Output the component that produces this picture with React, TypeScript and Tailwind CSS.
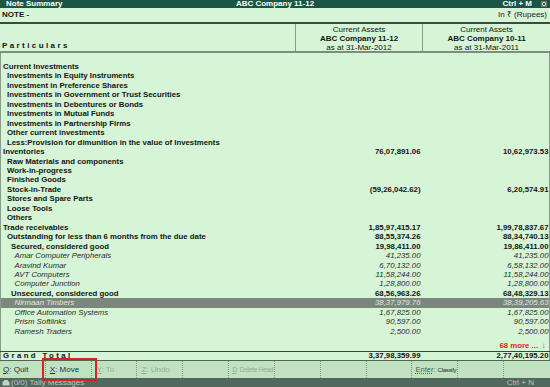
import React from 'react';

type Row = { t: string; l: number; k: 'b' | 'i' | 'h'; a?: string; b?: string };

const R: Row[] = [
  { t: 'Current Investments', l: 0, k: 'b' },
  { t: 'Investments in Equity Instruments', l: 1, k: 'b' },
  { t: 'Investment in Preference Shares', l: 1, k: 'b' },
  { t: 'Investments in Government or Trust Securities', l: 1, k: 'b' },
  { t: 'Investments in Debentures or Bonds', l: 1, k: 'b' },
  { t: 'Investments in Mutual Funds', l: 1, k: 'b' },
  { t: 'Investments in Partnership Firms', l: 1, k: 'b' },
  { t: 'Other current investments', l: 1, k: 'b' },
  { t: 'Less:Provision for dimunition in the value of Investments', l: 1, k: 'b' },
  { t: 'Inventories', l: 0, k: 'b', a: '76,07,891.06', b: '10,62,973.53' },
  { t: 'Raw Materials and components', l: 1, k: 'b' },
  { t: 'Work-in-progress', l: 1, k: 'b' },
  { t: 'Finished Goods', l: 1, k: 'b' },
  { t: 'Stock-in-Trade', l: 1, k: 'b', a: '(59,26,042.62)', b: '6,20,574.91' },
  { t: 'Stores and Spare Parts', l: 1, k: 'b' },
  { t: 'Loose Tools', l: 1, k: 'b' },
  { t: 'Others', l: 1, k: 'b' },
  { t: 'Trade receivables', l: 0, k: 'b', a: '1,85,97,415.17', b: '1,99,78,837.67' },
  { t: 'Outstanding for less than 6 months from the due date', l: 1, k: 'b', a: '88,55,374.26', b: '88,34,740.13' },
  { t: 'Secured, considered good', l: 2, k: 'b', a: '19,98,411.00', b: '19,86,411.00' },
  { t: 'Amar Computer Peripherals', l: 3, k: 'i', a: '41,235.00', b: '41,235.00' },
  { t: 'Aravind Kumar', l: 3, k: 'i', a: '6,70,132.00', b: '6,58,132.00' },
  { t: 'AVT Computers', l: 3, k: 'i', a: '11,58,244.00', b: '11,58,244.00' },
  { t: 'Computer Junction', l: 3, k: 'i', a: '1,28,800.00', b: '1,28,800.00' },
  { t: 'Unsecured, considered good', l: 2, k: 'b', a: '68,56,963.26', b: '68,48,329.13' },
  { t: 'Nirmaan Timbers', l: 3, k: 'h', a: '38,37,979.76', b: '38,39,205.63' },
  { t: 'Office Automation Systems', l: 3, k: 'i', a: '1,67,825.00', b: '1,67,825.00' },
  { t: 'Prism Softlinks', l: 3, k: 'i', a: '90,597.00', b: '90,597.00' },
  { t: 'Ramesh Traders', l: 3, k: 'i', a: '2,500.00', b: '2,500.00' },
];

const indent = ['pl-[2px]', 'pl-[6px]', 'pl-[10px]', 'pl-[13.5px]'];

function BodyRow({ r }: { r: Row }) {
  const cls =
    r.k === 'h'
      ? 'bg-[#7b867c] text-[#e2e8e2] italic'
      : r.k === 'i'
      ? 'italic text-[#2a2a2a]'
      : 'font-bold text-[#141414]';
  return (
    <div className={`grid grid-cols-[294px_127px_1fr] h-[9.46px] leading-[9.46px] ${cls}`}>
      <div className={`${indent[r.l]} whitespace-nowrap`}>{r.t}</div>
      <div className="text-right pr-[1.5px] whitespace-nowrap">{r.a}</div>
      <div className="text-right pr-[0.5px] whitespace-nowrap">{r.b}</div>
    </div>
  );
}

function Btn({ children, last }: { children?: React.ReactNode; last?: boolean }) {
  return (
    <div
      className={`flex items-center pl-[3px] overflow-hidden whitespace-nowrap ${
        last ? '' : 'border-r border-dotted border-[#7f9a7f]'
      }`}
    >
      {children}
    </div>
  );
}

export default function App() {
  return (
    <div className="relative w-[550px] h-[387px] overflow-hidden flex flex-col bg-[#d6f5d6] font-['Liberation_Sans',Arial,sans-serif] text-[7.8px] text-[#141414]">
      {/* Title bar */}
      <div className="h-[8px] shrink-0 bg-[#1b5545] text-white font-bold text-[8px] leading-[8px] grid grid-cols-[1fr_auto_1fr]">
        <div className="pl-[6px]">Note Summary</div>
        <div>ABC Company 11-12</div>
        <div className="flex justify-end items-center">
          <span className="mr-[9px]">Ctrl + M</span>
          <span className="w-[6px] h-[6px] mr-[3px] bg-[#c9d2c9] border border-[#6c7a6c] flex items-center justify-center">
            <svg width="4" height="4" viewBox="0 0 4 4">
              <path d="M0.5 0.5L3.5 3.5M3.5 0.5L0.5 3.5" stroke="#333" strokeWidth="0.8" />
            </svg>
          </span>
        </div>
      </div>

      {/* NOTE row */}
      <div className="h-[14px] shrink-0 flex items-center justify-between px-[2px] text-[8px] leading-[14px]">
        <span className="font-bold">NOTE -</span>
        <span className="pr-[1px] text-[#1a1a1a]">In ₹ (Rupees)</span>
      </div>
      <div className="h-[2px] shrink-0 bg-[#3d4840]" />

      {/* Header */}
      <div className="h-[27px] shrink-0 grid grid-cols-[295px_127px_1fr] text-[8px] leading-[9.2px]">
        <div className="flex items-end pl-[2px] pb-[2px] font-bold tracking-[2.4px]">Particulars</div>
        <div className="border-l border-[#8b9b8b] flex flex-col items-center pt-[0.5px]">
          <span>Current Assets</span>
          <span className="font-bold">ABC Company 11-12</span>
          <span>as at 31-Mar-2012</span>
        </div>
        <div className="border-l border-[#8b9b8b] flex flex-col items-center pt-[0.5px]">
          <span>Current Assets</span>
          <span className="font-bold">ABC Company 10-11</span>
          <span>as at 31-Mar-2011</span>
        </div>
      </div>
      <div className="h-[2px] shrink-0 bg-[#7d8e7d]" />

      {/* Body */}
      <div className="flex-1 flex flex-col border-l border-r border-[#8b9b8b] pt-[9px] pb-[1px]">
        {R.map((r, i) => (
          <BodyRow key={i} r={r} />
        ))}
        <div className="flex-1" />
        <div className="h-[9px] leading-[9px] flex justify-end pr-[3px] text-[#e02424] font-bold">
          <span>68 more ...</span>
          <span className="ml-[4px] font-normal">↓</span>
        </div>
      </div>

      {/* Grand total */}
      <div className="h-[1px] shrink-0 bg-[#3a463c]" />
      <div className="h-[8px] shrink-0 grid grid-cols-[294px_127px_1fr] leading-[8px] font-bold border-l border-r border-[#8b9b8b]">
        <div className="pl-[2px] tracking-[2.4px]">Grand Total</div>
        <div className="text-right pr-[1.5px]">3,37,98,359.99</div>
        <div className="text-right pr-[0.5px]">2,77,40,195.20</div>
      </div>
      <div className="h-[1px] shrink-0 bg-[#55655a]" />

      {/* Button bar */}
      <div className="h-[17px] shrink-0 bg-[#c0e2c0] grid grid-cols-12 text-[8px] leading-[17px]">
        <Btn>
          <span className="text-[#1c2b5c]">
            <span className="underline">Q</span>: Quit
          </span>
        </Btn>
        <Btn>
          <span className="text-[#1c2b5c] pl-[1px]">
            <span className="underline">X</span>: Move
          </span>
        </Btn>
        <Btn>
          <span className="text-[#93ad93] pl-[2px]">
            <span className="underline">Y</span>: To
          </span>
        </Btn>
        <Btn>
          <span className="text-[#93ad93] pl-[1px]">
            <span className="underline">Z</span>: Undo
          </span>
        </Btn>
        <Btn />
        <Btn>
          <span className="text-[#93ad93] text-[6.5px] tracking-[-0.25px]">
            <span className="underline">D</span>: Delete Head
          </span>
        </Btn>
        <Btn />
        <Btn />
        <Btn />
        <Btn>
          <span>
            <span className="text-[#4a5878] text-[7.5px] underline decoration-dotted">Enter</span>
            <span className="text-[#4a5878] text-[7.5px]">: </span>
            <span className="text-[6px] text-[#2a2a3a] tracking-[-0.3px]">Classify</span>
          </span>
        </Btn>
        <Btn />
        <Btn last />
      </div>

      {/* Status bar */}
      <div className="h-[9px] shrink-0 bg-[#51685f] flex items-center justify-between text-[#b9c6c0] text-[8px] leading-[9px]">
        <div className="flex items-center pl-[2px]">
          <svg width="8" height="6" viewBox="0 0 8 6" className="mr-[1px]">
            <rect x="0.5" y="1.5" width="7" height="4" fill="#c6d0cb" />
            <rect x="2" y="0" width="4" height="2" fill="#c6d0cb" />
          </svg>
          <span>(0/0) Tally Messages</span>
        </div>
        <span className="pr-[16px]">Ctrl + N</span>
      </div>

      {/* Red highlight box */}
      <div className="absolute left-[42px] top-[358px] w-[55px] h-[23px] border-2 border-[#d42424]" />
    </div>
  );
}
